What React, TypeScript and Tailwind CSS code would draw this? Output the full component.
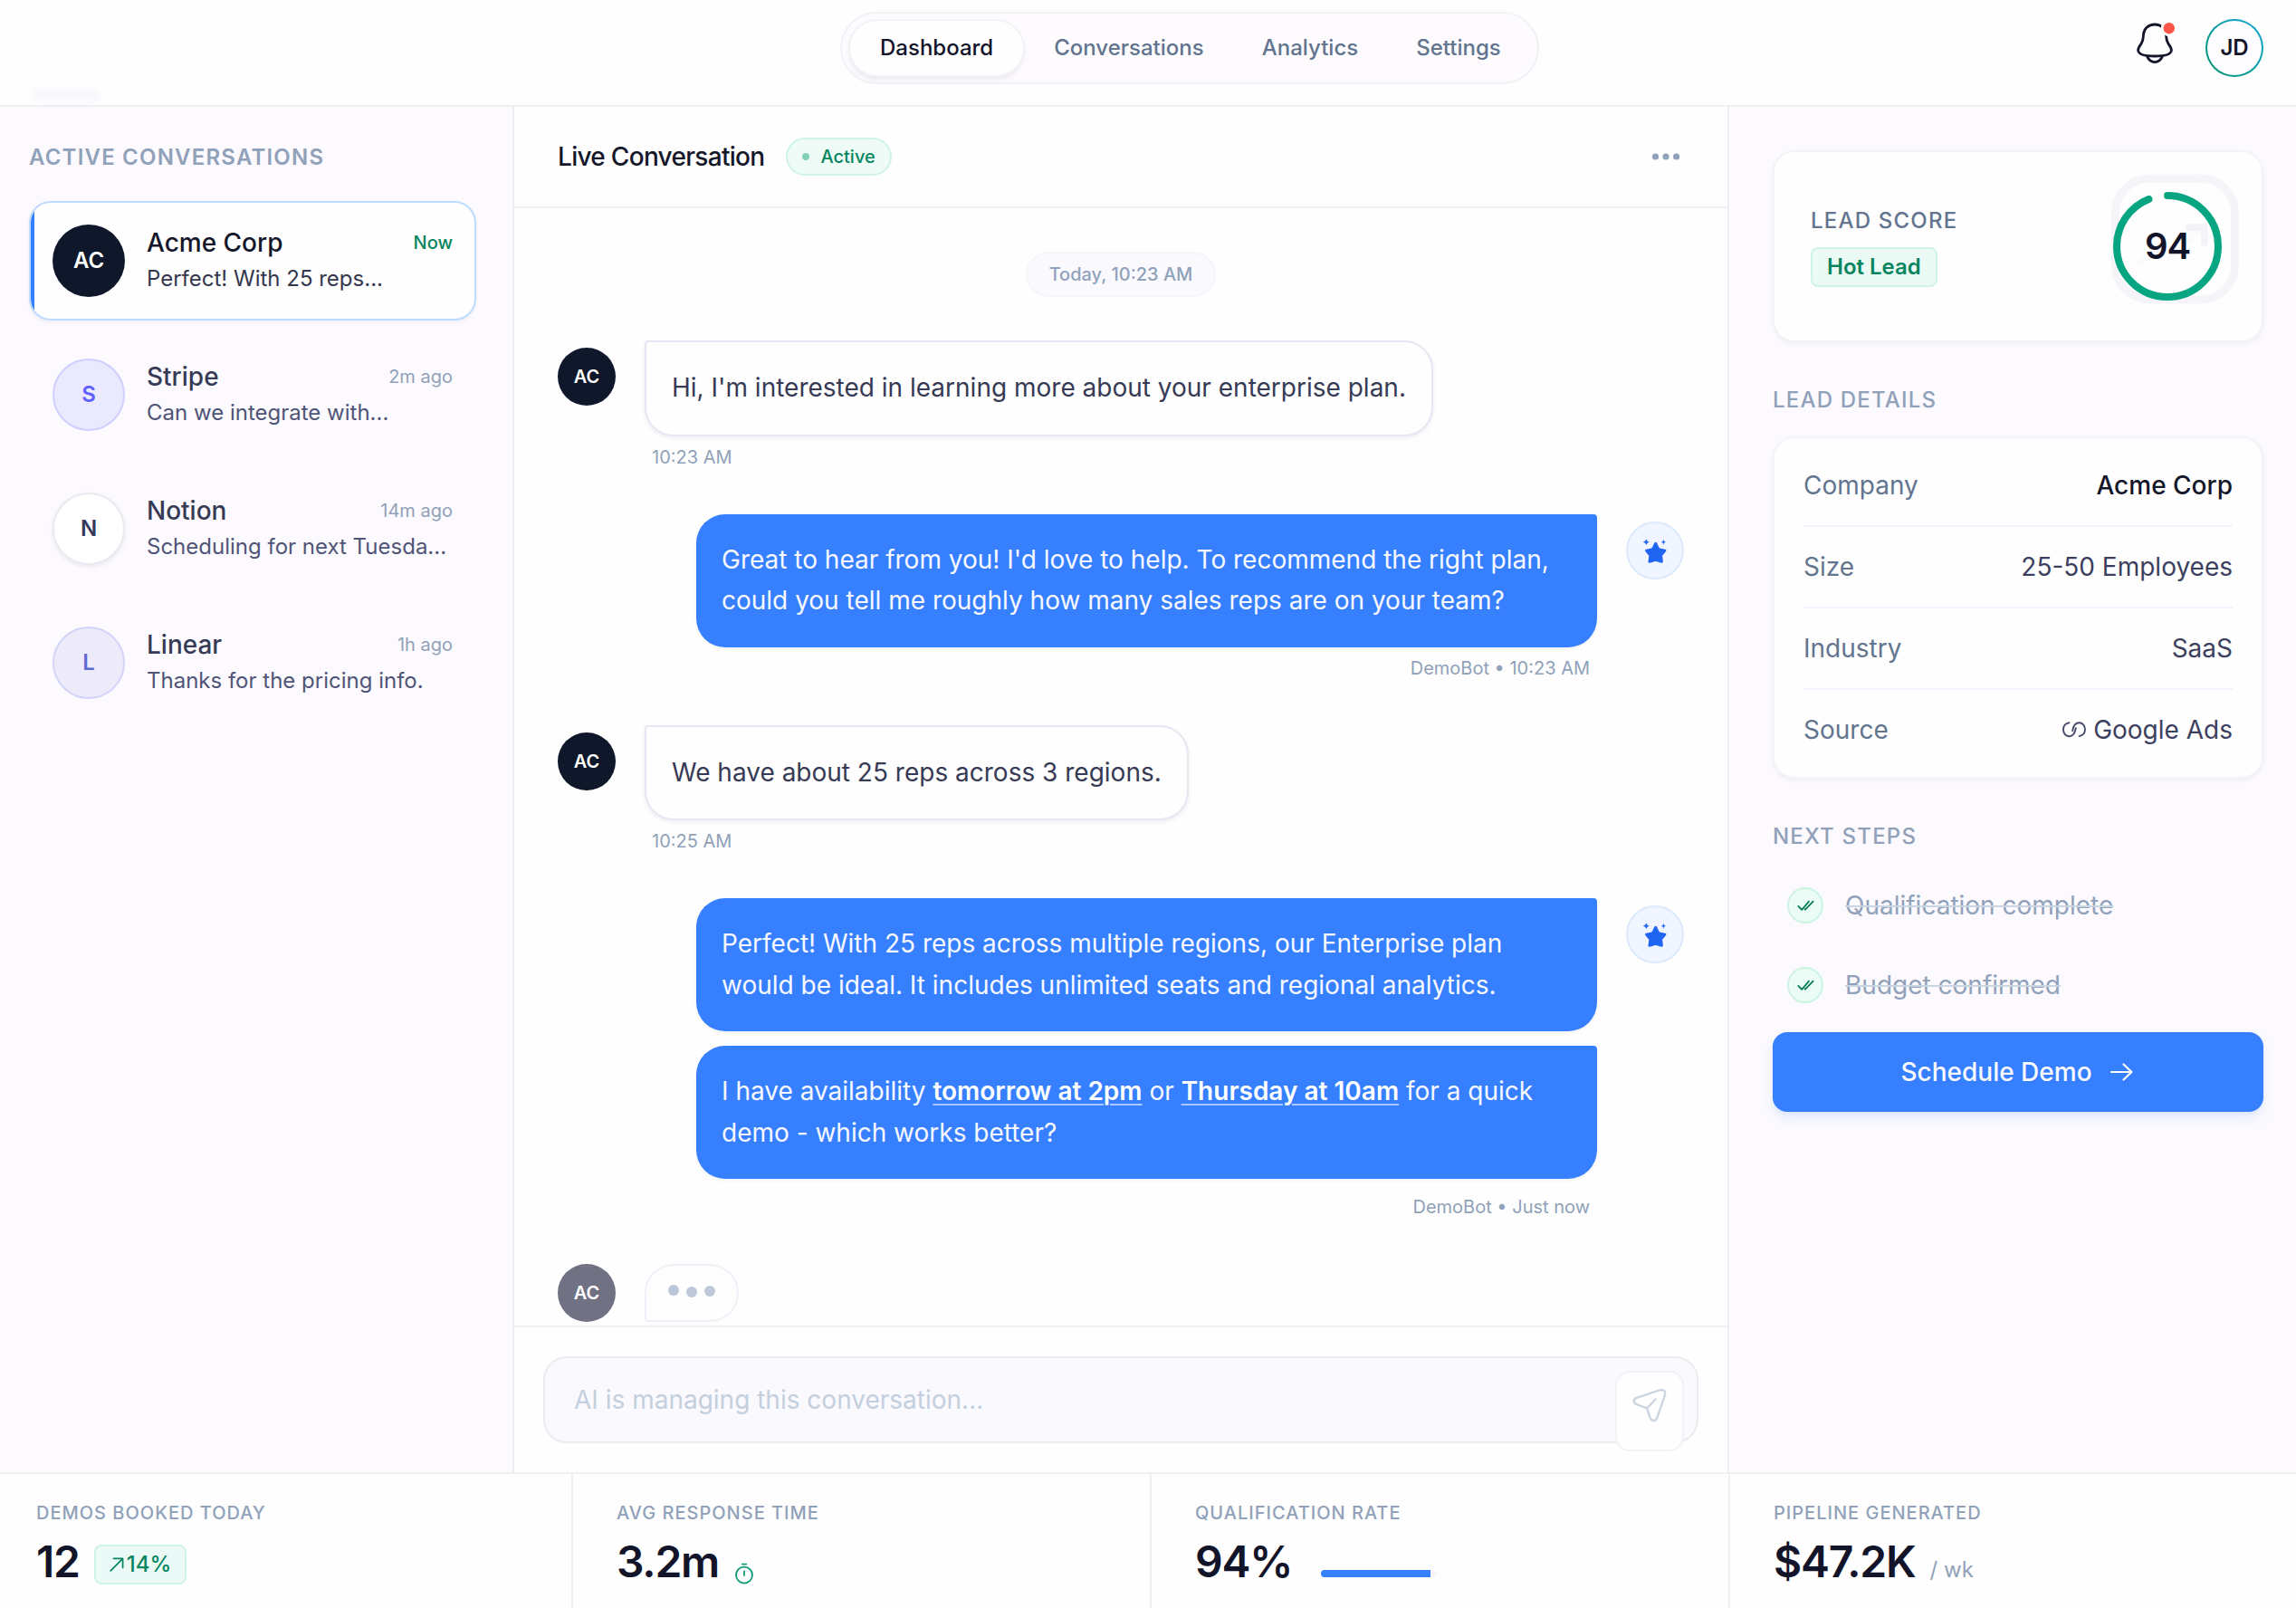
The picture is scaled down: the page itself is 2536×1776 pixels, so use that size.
import React from "react";

const ROOT_FONT = "font-['Inter','Liberation_Sans',sans-serif]";

function BellIcon() {
  return (
    <svg className="h-[46px] w-10 overflow-visible" viewBox="0 0 40 46" fill="none" stroke="#14162a" strokeWidth="2.8" strokeLinecap="round" strokeLinejoin="round">
      <path d="M20 2 C12.8 2 7.9 6.8 7.5 13.2 C7.2 17.5 7.4 20 5 23.4 C3 26.2 1.4 28 1.6 30.6 C2.2 35.6 10 37 20 37 C30 37 37.8 35.6 38.4 30.6 C38.6 28 37 26.2 35 23.4 C32.6 20 32.8 17.5 32.5 13.2 C32.1 6.8 27.2 2 20 2 Z" />
      <path d="M11.6 37.4 C13.4 41.4 16.4 43.6 20 43.6 C23.6 43.6 26.6 41.4 28.4 37.4" />
      <circle cx="35.8" cy="6.2" r="9" fill="#fefefe" stroke="none" />
      <circle cx="35.8" cy="6.2" r="6.2" fill="#fc5447" stroke="none" />
    </svg>
  );
}

function BotAvatar() {
  return (
    <div className="mt-2 flex size-16 shrink-0 items-center justify-center rounded-full border-2 border-[#dce9fd] bg-[#f0f5ff]">
      <svg className="size-8" viewBox="0 0 32 32" fill="#2165f3">
        <path d="M16.7 8.2 L20 14.6 L27 16 L22.6 21.3 L23.5 28.3 L16.7 26.4 L9.9 28.3 L10.8 21.3 L6.4 16 L13.4 14.6 Z" stroke="#2165f3" strokeWidth="2.8" strokeLinejoin="round" />
        <path d="M6.3 3.2 L7.4 5.6 L9.8 6.7 L7.4 7.8 L6.3 10.2 L5.2 7.8 L2.8 6.7 L5.2 5.6 Z" />
        <path d="M25.4 4 L26.2 5.9 L28.1 6.7 L26.2 7.5 L25.4 9.4 L24.6 7.5 L22.7 6.7 L24.6 5.9 Z" />
      </svg>
    </div>
  );
}

function LinkIcon() {
  return (
    <svg className="h-[18px] w-[26px] overflow-visible" viewBox="0 0 26 18" fill="none" stroke="#45496a" strokeWidth="1.9" strokeLinecap="round">
      <path d="M7.4 1.3 C3.6 1.8 1 4.8 1 8.8 C1 13 3.8 16.2 7.4 16.2 C11.4 16.2 14 13 14.8 7.2" />
      <path d="M18.6 16.1 C22.4 15.6 25 12.6 25 8.6 C25 4.4 22.2 1.2 18.6 1.2 C14.6 1.2 12 4.4 11.2 10.2" />
    </svg>
  );
}

function Header() {
  return (
    <header className="relative flex h-[118px] shrink-0 items-start justify-between border-b-2 border-[#f0f0f3] bg-[#fefefe] pl-[928px] pr-9 pt-[13px]">
      <div className="absolute left-[38px] top-[101px] h-[8px] w-[72px] rounded-full bg-[#e6e7fb] opacity-50 blur-[5px]" />
      <nav className="flex h-20 items-center rounded-full border-2 border-[#f3f1f7] bg-[#fdfbfe] px-[9px] text-[24px] font-medium text-[#62748e]">
        <span className="mr-[2px] flex h-[60px] items-center rounded-full bg-[#fefefe] px-[33px] text-[#12142a] shadow-[0_0_0_2px_#f4f2f7,0_4px_6px_rgba(30,20,60,0.1)]">Dashboard</span>
        <span className="px-8">Conversations</span>
        <span className="px-8">Analytics</span>
        <span className="pl-8 pr-[31px]">Settings</span>
      </nav>
      <div className="flex items-start gap-9 pt-2">
        <div className="pt-1">
          <BellIcon />
        </div>
        <div className="flex size-16 rounded-full bg-linear-to-tr from-[#07906a] to-[#17a8d6] p-[2px]">
          <div className="flex size-full items-center justify-center rounded-full bg-[#fdfcfe] text-[24px] font-semibold text-[#14162a]">JD</div>
        </div>
      </div>
    </header>
  );
}

const conversations = [
  { initials: "AC", name: "Acme Corp", time: "Now", text: "Perfect! With 25 reps...", active: true, avatar: "bg-[#0f172b] text-white" },
  { initials: "S", name: "Stripe", time: "2m ago", text: "Can we integrate with...", active: false, avatar: "border-2 border-[#cfcfff] bg-[#ebe9fe] text-[#625fff]" },
  { initials: "N", name: "Notion", time: "14m ago", text: "Scheduling for next Tuesda...", active: false, avatar: "border-2 border-[#ebeaf1] bg-white text-[#363a5a] shadow-[0_2px_5px_rgba(30,20,60,0.08)]" },
  { initials: "L", name: "Linear", time: "1h ago", text: "Thanks for the pricing info.", active: false, avatar: "border-2 border-[#d2d4f8] bg-[#edebf9] text-[#5e6ad2]" },
];

function Sidebar() {
  return (
    <aside className="w-[568px] shrink-0 border-r-2 border-[#eeedf1] bg-[#fcfafe] pl-8 pr-10 pt-10">
      <h2 className="mb-8 text-[24px] font-semibold leading-8 tracking-[0.05em] text-[#90a1b9]">ACTIVE CONVERSATIONS</h2>
      <div className="flex flex-col gap-4">
        {conversations.map((c) => (
          <div
            key={c.name}
            className={
              c.active
                ? "relative flex h-[132px] gap-6 overflow-hidden rounded-3xl border-2 border-[#bedbff] bg-[#fefefe] p-6 shadow-[0_2px_4px_rgba(30,20,60,0.05)]"
                : "relative flex h-[132px] gap-6 rounded-3xl border-2 border-transparent p-6"
            }
          >
            {c.active && <div className="absolute inset-y-0 left-0 w-1 bg-[#3580ff]" />}
            <div className={`flex size-20 shrink-0 items-center justify-center rounded-full text-[24px] font-semibold ${c.avatar}`}>{c.initials}</div>
            <div className="min-w-0 flex-1">
              <div className="flex h-10 items-center justify-between">
                <span className={c.active ? "text-[28px] font-medium text-[#14162a]" : "text-[28px] font-medium text-[#363a55]"}>{c.name}</span>
                <span className={c.active ? "text-[20px] font-medium text-[#07855f]" : "text-[20px] text-[#90a1b9]"}>{c.time}</span>
              </div>
              <div className={c.active ? "mt-1 whitespace-nowrap text-[24px] leading-8 text-[#34374d]" : "mt-1 whitespace-nowrap text-[24px] leading-8 text-[#505476]"}>{c.text}</div>
            </div>
          </div>
        ))}
      </div>
    </aside>
  );
}

function Incoming({ text, time }: { text: string; time: string }) {
  return (
    <div className="flex gap-8">
      <div className="mt-2 flex size-16 shrink-0 items-center justify-center rounded-full bg-[#0f172b] text-[20px] font-semibold text-white">AC</div>
      <div>
        <div className="rounded-[32px] rounded-tl-[4px] border-2 border-[#e6e7f2] bg-[#fefefe] p-7 text-[28px] leading-[45.5px] text-[#363a55] shadow-[0_2px_5px_rgba(30,20,60,0.07)]">{text}</div>
        <div className="mt-2 pl-2 text-[20px] leading-[30px] text-[#90a1b9]">{time}</div>
      </div>
    </div>
  );
}

function Outgoing({ children, time, spaced }: { children: React.ReactNode; time: string; spaced?: boolean }) {
  return (
    <div className="flex justify-end gap-8">
      <div className={spaced ? "flex w-[995px] flex-col gap-4" : "flex w-[995px] flex-col gap-2"}>
        {children}
        <div className="pr-2 text-right text-[20px] leading-[30px] text-[#90a1b9]">{time}</div>
      </div>
      <BotAvatar />
    </div>
  );
}

function Bubble({ children }: { children: React.ReactNode }) {
  return <div className="rounded-[32px] rounded-tr-[4px] bg-[#3680ff] p-7 text-[28px] leading-[45.5px] text-[#f8f8ff] shadow-[0_2px_4px_rgba(30,20,60,0.05)]">{children}</div>;
}

function Strong({ children }: { children: React.ReactNode }) {
  return <span className="font-semibold text-white underline decoration-[#a9c8ff] decoration-2 underline-offset-4">{children}</span>;
}

function Chat() {
  return (
    <main className="flex min-w-0 flex-1 flex-col bg-[#fefefe]">
      <div className="flex h-[112px] shrink-0 items-center justify-between border-b-2 border-[#f0f0f3] px-12">
        <div className="flex items-center gap-6">
          <h1 className="text-[28px] font-medium tracking-[-0.025em] text-[#14162a]">Live Conversation</h1>
          <span className="flex h-[42px] items-center gap-3 rounded-full border-2 border-[#cff4e4] bg-[#eefbf7] px-4 text-[20px] font-medium text-[#07855f]">
            <span className="size-2 rounded-full bg-[#83cfb7]" />
            Active
          </span>
        </div>
        <svg className="size-10" viewBox="0 0 40 40" fill="#90a1b9">
          <circle cx="8.5" cy="20" r="3.6" />
          <circle cx="20" cy="20" r="3.6" />
          <circle cx="31.6" cy="20" r="3.6" />
        </svg>
      </div>

      <div className="flex min-h-0 flex-1 flex-col gap-12 overflow-hidden px-12 pt-12">
        <div className="flex h-[50px] shrink-0 items-center self-center rounded-full border-2 border-[#f6f5fb] bg-[#faf9fe] px-6 text-[20px] font-medium text-[#90a1b9]">Today, 10:23 AM</div>
        <Incoming text="Hi, I'm interested in learning more about your enterprise plan." time="10:23 AM" />
        <Outgoing time="DemoBot • 10:23 AM">
          <Bubble>Great to hear from you! I'd love to help. To recommend the right plan, could you tell me roughly how many sales reps are on your team?</Bubble>
        </Outgoing>
        <Incoming text="We have about 25 reps across 3 regions." time="10:25 AM" />
        <Outgoing time="DemoBot • Just now" spaced>
          <Bubble>Perfect! With 25 reps across multiple regions, our Enterprise plan would be ideal. It includes unlimited seats and regional analytics.</Bubble>
          <Bubble>
            I have availability <Strong>tomorrow at 2pm</Strong> or <Strong>Thursday at 10am</Strong> for a quick demo - which works better?
          </Bubble>
        </Outgoing>
        <div className="flex gap-8">
          <div className="flex size-16 items-center justify-center rounded-full bg-[#717184] text-[20px] font-semibold text-white">AC</div>
          <div className="flex h-16 w-[104px] items-start gap-2 rounded-[32px] rounded-bl-[4px] border-2 border-[#f1f0f8] bg-[#fefefe] px-6 pt-[21px]">
            <span className="size-3 rounded-full bg-[#bac7d8]" />
            <span className="mt-[2px] size-3 rounded-full bg-[#bfc8db]" />
            <span className="mt-px size-3 rounded-full bg-[#bfc8d8]" />
          </div>
        </div>
      </div>

      <div className="h-[162px] shrink-0 border-t-2 border-[#f0f0f3] px-8 py-8">
        <div className="relative flex h-24 items-center rounded-[26px] border-2 border-[#ecebf0] bg-[#faf9fe] px-8 text-[28px] text-[#c4cfdd]">
          AI is managing this conversation...
          <div className="absolute right-[14px] top-[14px] flex h-[89px] w-[76px] justify-center rounded-2xl border-2 border-[#f2f1f7] bg-[#fefefe] pt-[18px]">
            <svg className="h-9 w-9 overflow-visible" viewBox="0 0 108 107" fill="none" stroke="#ccd4e1" strokeWidth="7" strokeLinecap="round" strokeLinejoin="round">
              <path d="M11 29 L86 4 C100 0 108 6 105 20 L79 95 C75 108 60 108 56 95 L45 64 L12 51 C-1 46 -1 33 11 29 Z M45 64 L74 34" />
            </svg>
          </div>
        </div>
      </div>
    </main>
  );
}

function ScoreRing() {
  return (
    <svg className="size-[120px] overflow-visible" viewBox="0 0 120 120" fill="none">
      <rect x="2.5" y="-15" width="132" height="134" rx="38" stroke="#f5f4f8" strokeWidth="9" />
      <path d="M30 79 L48 62 L62 72 L98 40" stroke="#fbfafc" strokeWidth="8" strokeLinecap="round" strokeLinejoin="round" />
      <path d="M84 39 H101 V56" stroke="#f4f3f7" strokeWidth="8" strokeLinecap="round" strokeLinejoin="round" />
      <circle cx="60" cy="60" r="56" stroke="#07a581" strokeWidth="8" strokeLinecap="round" strokeDasharray="94 100" pathLength="100" transform="rotate(-90 60 60)" />
      <text x="60" y="74" textAnchor="middle" fill="#12142a" className="text-[40px] font-semibold tracking-[-0.025em]">94</text>
    </svg>
  );
}

const details = [
  { label: "Company", value: "Acme Corp" },
  { label: "Size", value: "25-50 Employees" },
  { label: "Industry", value: "SaaS" },
  { label: "Source", value: "Google Ads" },
];

function DetailsPanel() {
  return (
    <aside className="w-[628px] shrink-0 border-l-2 border-[#eeedf1] bg-[#fcfafe] pl-12 pr-9 pt-12">
      <div className="flex h-[212px] items-center justify-between rounded-3xl border-2 border-[#f4f3f7] bg-[#fefefe] pl-10 pr-11 shadow-[0_2px_5px_rgba(30,20,60,0.05)]">
        <div className="flex flex-col items-start gap-[13px] pt-px">
          <div className="text-[24px] font-medium leading-8 tracking-[0.05em] text-[#62748e]">LEAD SCORE</div>
          <div className="flex h-11 items-center rounded-lg border-2 border-[#cff4e4] bg-[#ebfaf5] px-4 text-[24px] font-semibold text-[#07855f]">Hot Lead</div>
        </div>
        <ScoreRing />
      </div>

      <h2 className="mb-6 mt-12 text-[24px] font-medium leading-8 tracking-[0.05em] text-[#90a1b9]">LEAD DETAILS</h2>
      <div className="rounded-3xl border-2 border-[#f4f3f7] bg-[#fefefe] px-8 py-2 text-[28px] shadow-[0_2px_5px_rgba(30,20,60,0.05)]">
        {details.map((d, i) => (
          <div key={d.label} className={i < 3 ? "flex h-[90px] items-center justify-between border-b-2 border-[#f4f3fc]" : "flex h-[88px] items-center justify-between"}>
            <span className="text-[#62748e]">{d.label}</span>
            <span className={i === 0 ? "font-medium text-[#14162a]" : "flex items-center gap-2 text-[#3c3f5e]"}>
              {d.label === "Source" && <LinkIcon />}
              {d.value}
            </span>
          </div>
        ))}
      </div>

      <h2 className="mb-6 mt-12 text-[24px] font-medium leading-8 tracking-[0.05em] text-[#90a1b9]">NEXT STEPS</h2>
      <div className="flex flex-col gap-4">
        {["Qualification complete", "Budget confirmed"].map((s) => (
          <div key={s} className="flex h-[72px] items-center gap-6 px-4">
            <div className="flex size-10 items-center justify-center rounded-full border-2 border-[#cdf3e4] bg-[#ebfbf5]">
              <svg className="h-[10px] w-[17px] overflow-visible" viewBox="0 0 17 10" fill="none" stroke="#0b7f5c" strokeWidth="1.8" strokeLinecap="round" strokeLinejoin="round">
                <path d="M0.4 6 L4.2 9.8 L12 0.6 M7.6 9.2 L8 9.6 L16.6 0.6" />
              </svg>
            </div>
            <span className="text-[28px] text-[#90a1b9] line-through decoration-[#cad5e2] decoration-2">{s}</span>
          </div>
        ))}
        <div className="flex h-[88px] items-center justify-center gap-4 rounded-2xl bg-[#3680ff] text-[28px] font-medium text-[#fbfaff] shadow-[0_8px_14px_rgba(54,128,255,0.1),0_2px_4px_rgba(54,128,255,0.08)]">
          Schedule Demo
          <svg className="size-8" viewBox="0 0 32 32" fill="none" stroke="currentColor" strokeWidth="2.2" strokeLinecap="round" strokeLinejoin="round">
            <path d="M5 16 H27.5 M18.5 7.5 L27.5 16 L18.5 24.5" />
          </svg>
        </div>
      </div>
    </aside>
  );
}

function Stat({ label, className, children }: { label: string; className: string; children: React.ReactNode }) {
  return (
    <div className={className}>
      <div className="text-[20px] font-medium leading-[30px] tracking-[0.05em] text-[#90a1b9]">{label}</div>
      <div className="mt-[7px] flex h-[64px] items-center text-[48px] font-semibold tracking-[-0.025em] text-[#12142a]">{children}</div>
    </div>
  );
}

function StatsBar() {
  return (
    <footer className="flex h-[150px] shrink-0 border-t-2 border-[#f0f0f3] bg-[#fefefe]">
      <Stat label="DEMOS BOOKED TODAY" className="w-[633px] border-r-2 border-[#f0f0f3] pl-10 pt-7">
        12
        <span className="ml-4 mt-[5px] flex h-11 items-center gap-[3px] rounded-lg border-2 border-[#cff4e4] bg-[#ebfaf6] px-[15px] text-[24px] font-medium tracking-normal text-[#07855f]">
          <svg className="size-4" viewBox="0 0 16 16" fill="none" stroke="currentColor" strokeWidth="1.7" strokeLinecap="round" strokeLinejoin="round">
            <path d="M1.2 14.8 L14.4 1.6 M4.5 1.4 H14.6 V11.5" />
          </svg>
          14%
        </span>
      </Stat>
      <Stat label="AVG RESPONSE TIME" className="w-[639px] border-r-2 border-[#f0f0f3] pl-12 pt-7">
        3.2m
        <svg className="ml-4 mt-[25px] h-6 w-6" viewBox="0 0 24 24" fill="none" stroke="#0f9a75" strokeWidth="1.8" strokeLinecap="round">
          <circle cx="12" cy="13.6" r="9" />
          <path d="M12 9.4 V14 M9.8 1.6 H14.2" />
        </svg>
      </Stat>
      <Stat label="QUALIFICATION RATE" className="w-[639px] border-r-2 border-[#f0f0f3] pl-12 pt-7">
        94%
        <span className="ml-8 mt-[25px] flex h-2 w-32 overflow-hidden rounded-full bg-[#f8f6fc]">
          <span className="w-[94%] bg-[#3680ff]" />
        </span>
      </Stat>
      <Stat label="PIPELINE GENERATED" className="flex-1 pl-12 pt-7">
        <span className="flex items-baseline gap-4">
          $47.2K
          <span className="text-[24px] font-normal tracking-normal text-[#90a1b9]">/ wk</span>
        </span>
      </Stat>
    </footer>
  );
}

export default function App() {
  return (
    <div className={`flex h-[1776px] w-[2536px] flex-col overflow-hidden bg-[#fefefe] antialiased ${ROOT_FONT}`}>
      <Header />
      <div className="flex min-h-0 flex-1">
        <Sidebar />
        <Chat />
        <DetailsPanel />
      </div>
      <StatsBar />
    </div>
  );
}
